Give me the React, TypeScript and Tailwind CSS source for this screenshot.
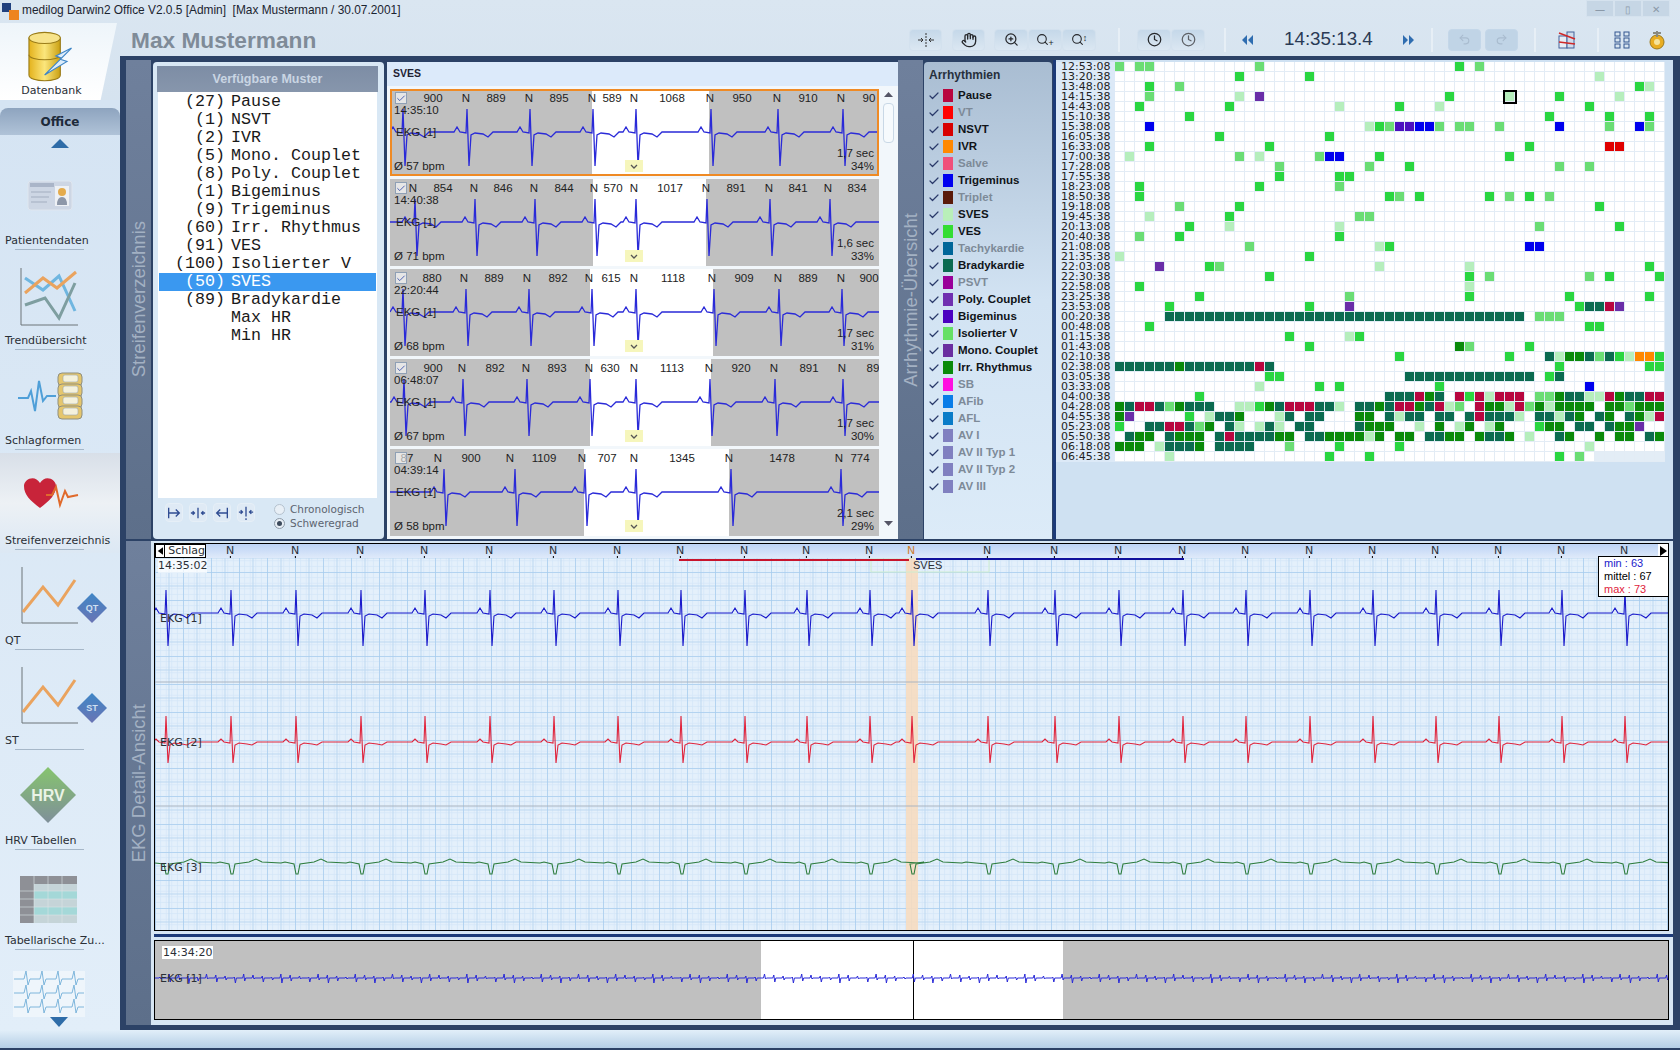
import { Check, Clock, Hand, Redo2, Search, Undo2, ZoomIn } from 'lucide-react';
import type { ReactNode } from 'react';

// ---- EKG helpers

function ekgPath(
  beats: number[],
  width: number,
  base: number,
  up: number,
  down: number,
  p: number,
  t: number
) {
  let d = `M0 ${base}`;
  for (const b of beats) {
    d += ` L${b - 13} ${base} L${b - 10} ${base - p} L${b - 7} ${base} L${b - 1} ${base + 1} L${b} ${base - up} L${b + 2} ${base + down} L${b + 4} ${base + 3} L${b + 8} ${base + 1} L${b + 16} ${base + 2} L${b + 21} ${base + t} L${b + 26} ${base}`;
  }
  return d + ` L${width} ${base}`;
}

function slowPath(beats: number[], base: number, width: number) {
  let d = `M0 ${base}`;
  for (const b of beats) {
    d += ` L${b - 2} ${base + 1} L${b} ${base + 11} L${b + 2} ${base + 11} L${b + 4} ${base + 1} L${b + 18} ${base - 1} L${b + 25} ${base - 4} L${b + 31} ${base - 1} L${b + 50} ${base} L${b + 54} ${base - 1}`;
  }
  return d + ` L${width} ${base}`;
}

function overviewPath(width: number) {
  let d = 'M0 37';
  for (let i = 0; i * 9.3 < width; i++) {
    const x = i * 9.3 + 4;
    d += ` L${x.toFixed(1)} 37 L${(x + 1).toFixed(1)} ${36 - (i * 7) % 4} L${(x + 2).toFixed(1)} ${38 + (i * 3) % 5} L${(x + 3).toFixed(1)} 37`;
  }
  return d;
}

// ---- Data

const patterns = [
  ['(27)', 'Pause'],
  ['(1)', 'NSVT'],
  ['(2)', 'IVR'],
  ['(5)', 'Mono. Couplet'],
  ['(8)', 'Poly. Couplet'],
  ['(1)', 'Bigeminus'],
  ['(9)', 'Trigeminus'],
  ['(60)', 'Irr. Rhythmus'],
  ['(91)', 'VES'],
  ['(100)', 'Isolierter V'],
  ['(50)', 'SVES'],
  ['(89)', 'Bradykardie'],
  ['', 'Max HR'],
  ['', 'Min HR'],
];

const strips = [
  {
    time: '14:35:10', bpm: '57', sec: '1,7 sec', pct: '34%', win: [202, 319], checked: true,
    spikes: [13, 77, 140, 203, 246, 321, 388, 453],
    labels: [[43, '900'], [76, 'N'], [106, '889'], [139, 'N'], [169, '895'], [202, 'N'], [222, '589'], [244, 'N'], [282, '1068'], [320, 'N'], [352, '950'], [387, 'N'], [418, '910'], [451, 'N'], [479, '90']],
  },
  {
    time: '14:40:38', bpm: '71', sec: '1,6 sec', pct: '33%', win: [203, 316], checked: true,
    spikes: [25, 85, 145, 205, 246, 317, 380, 440],
    labels: [[23, 'N'], [53, '854'], [84, 'N'], [113, '846'], [144, 'N'], [174, '844'], [204, 'N'], [223, '570'], [244, 'N'], [280, '1017'], [316, 'N'], [346, '891'], [379, 'N'], [408, '841'], [438, 'N'], [467, '834']],
  },
  {
    time: '22:20:44', bpm: '68', sec: '1,7 sec', pct: '31%', win: [200, 323], checked: true,
    spikes: [13, 76, 139, 202, 246, 324, 389, 452],
    labels: [[42, '880'], [74, 'N'], [104, '889'], [137, 'N'], [168, '892'], [199, 'N'], [221, '615'], [244, 'N'], [283, '1118'], [322, 'N'], [354, '909'], [388, 'N'], [418, '889'], [451, 'N'], [479, '900']],
  },
  {
    time: '06:48:07', bpm: '67', sec: '1,7 sec', pct: '30%', win: [200, 321], checked: true,
    spikes: [14, 73, 137, 200, 246, 320, 385, 453],
    labels: [[43, '900'], [72, 'N'], [105, '892'], [136, 'N'], [167, '893'], [199, 'N'], [220, '630'], [244, 'N'], [282, '1113'], [319, 'N'], [351, '920'], [384, 'N'], [419, '891'], [452, 'N'], [483, '89']],
  },
  {
    time: '04:39:14', bpm: '58', sec: '2,1 sec', pct: '29%', win: [194, 339], checked: false,
    spikes: [54, 125, 195, 246, 341, 451],
    labels: [[17, '87'], [48, 'N'], [81, '900'], [120, 'N'], [154, '1109'], [192, 'N'], [217, '707'], [244, 'N'], [292, '1345'], [339, 'N'], [392, '1478'], [449, 'N'], [470, '774']],
  },
];

const legend = [
  ['Pause', 'bg-[#b8063f]', true],
  ['VT', 'bg-[#ff0000]', false],
  ['NSVT', 'bg-[#d80000]', true],
  ['IVR', 'bg-[#ff8800]', true],
  ['Salve', 'bg-[#f0507a]', false],
  ['Trigeminus', 'bg-[#0000f0]', true],
  ['Triplet', 'bg-[#5a1a0a]', false],
  ['SVES', 'bg-[#b9efb9]', true],
  ['VES', 'bg-[#33dd33]', true],
  ['Tachykardie', 'bg-[#006699]', false],
  ['Bradykardie', 'bg-[#0b6b50]', true],
  ['PSVT', 'bg-[#990099]', false],
  ['Poly. Couplet', 'bg-[#7030b0]', true],
  ['Bigeminus', 'bg-[#4b00c0]', true],
  ['Isolierter V', 'bg-[#66e066]', true],
  ['Mono. Couplet', 'bg-[#6a2ea0]', true],
  ['Irr. Rhythmus', 'bg-[#0a8a0a]', true],
  ['SB', 'bg-[#ff10e0]', false],
  ['AFib', 'bg-[#0a7de8]', false],
  ['AFL', 'bg-[#0a7cc8]', false],
  ['AV I', 'bg-[#8080c0]', false],
  ['AV II Typ 1', 'bg-[#8080c0]', false],
  ['AV II Typ 2', 'bg-[#8080c0]', false],
  ['AV III', 'bg-[#8080c0]', false],
] as [string, string, boolean][];

const cellColors: Record<string, string> = {
  V: 'bg-[#2ad640]',
  I: 'bg-[#6bdd74]',
  S: 'bg-[#b6eebc]',
  B: 'bg-[#0b6b50]',
  G: 'bg-[#0a8a0a]',
  R: 'bg-[#b8063f]',
  N: 'bg-[#e00000]',
  T: 'bg-[#0000ee]',
  U: 'bg-[#4b10c0]',
  P: 'bg-[#6a2ea8]',
  O: 'bg-[#ff8800]',
};

const bradyRun = (from: number, to: number) => {
  let s = '';
  for (let i = from; i <= to; i++) s += ` ${i}B`;
  return s;
};

const gridRows: [string, string][] = [
  ['12:53:08', '0I 2I 3I 14I 34V 36I'],
  ['13:20:38', '12V 19V 48S'],
  ['13:48:08', '3V 6I 52V 53S'],
  ['14:15:38', '3I 12S 14P 33V 39S 44V 50S'],
  ['14:43:08', '2V 11V 22S 28V 32S 47V'],
  ['15:10:38', '7V 43V 49V 53V'],
  ['15:38:08', '3T 25S 26V 27I 28U 29U 30T 31T 32I 34I 35I 38I 44T 49I 52T 53I'],
  ['16:05:38', '10V 21V'],
  ['16:33:08', '3V 15V 41V 49N 50N'],
  ['17:00:38', '1S 12I 14S 20I 21T 22T 26V 39V'],
  ['17:28:08', '16I 25I 29V 44I 47I'],
  ['17:55:38', '16V 22V 23V'],
  ['18:23:08', '2V 14V 22I'],
  ['18:50:38', '2V 27V 28I 30V 37V 39I 41V 43I'],
  ['19:18:08', '6I 12V 48V'],
  ['19:45:38', '3S 11V 24I 25I'],
  ['20:13:08', '7V 11S 22S 42I 50V'],
  ['20:40:38', '2I 6V 22V'],
  ['21:08:08', '13I 26S 27V 41T 42T'],
  ['21:35:38', '0S 19V'],
  ['22:03:08', '4P 9V 10I 26S 35S 53V'],
  ['22:30:38', '15V 35V 37I 47I 49V 54V'],
  ['22:58:08', '2V 35S'],
  ['23:25:38', '8V 23I 35V 45V 53V'],
  ['23:53:08', '5V 19V 23P 46V 47B 48B 49R 50P'],
  ['00:20:38', bradyRun(5, 40) + ' 42I 43I 44I'],
  ['00:48:08', '3V 47V 48V'],
  ['01:15:38', '17V 23S 24V'],
  ['01:43:08', '19V 34G 35I 41V'],
  ['02:10:38', '28V 39V 43B 44S 45G 46G 47B 48I 49B 50V 51S 52O 53O 54V'],
  ['02:38:08', bradyRun(0, 13) + ' 6G 14R 15B 44V 53V 54V'],
  ['03:05:38', '15V 16V' + bradyRun(29, 41) + ' 43V 44B'],
  ['03:33:08', '14S 20V 22V 32V 47T'],
  ['04:00:38', '8V 27B 28B 29B 30R 31G 32B 34R 35V 36R 37S 38R 39R 40R 42I 43I 44G 45B 46B 47S 48S 49R 50G 51B 52B 53R 54R'],
  ['04:28:08', '0G 1B 2R 3R 4B 5I 6G 7B 8B 9B 12S 13S 14V 15G 16B 17R 18R 19R 20B 21B 22S 24B 25B 26G 27B 28R 29R 30G 31B 32R 33S 34I 36R 37G 38G 39S 40R 41I 42G 43S 44G 45G 46G 47G 49G 50G 51I 52G 53G 54G'],
  ['04:55:38', '0G 1P 7V 9S 10B 11B 12G 16S 17B 19B 20B 24G 25G 27B 28S 29B 30B 32B 33B 35B 36R 37B 38B 39B 40S 42B 43B 44S 45B 46G 48B 49G 51B 52G 53S 54R'],
  ['05:23:08', '0V 3B 4B 5R 6R 7B 8I 9G 11B 12S 14S 15B 16S 18B 19B 24B 25G 26G 27G 30S 32G 34S 35G 37S 38G 42V 43G 44G 46B 47B 49B 50G 51G 52P'],
  ['05:50:38', '1B 2G 3G 5B 6G 7G 8G 10B 11R 12B 13B 14B 15B 16G 17G 19B 20B 21G 22G 23G 24G 25S 26G 28G 29G 31B 32B 33G 34G 36G 37B 38B 39G 41S 44B 45G 48G 50G 51G 53B 54G'],
  ['06:18:08', '0G 1G 2G 4S 5B 6B 7B 8G 10B 11B 12B 13B 17I 22V 28V 47S'],
  ['06:45:38', '5S 21V 25V 44V 46I'],
];

const detailBeats = [165, 230, 295, 360, 424, 489, 553, 617, 680, 744, 806, 869, 911, 987, 1054, 1118, 1182, 1245, 1309, 1372, 1435, 1498, 1561, 1624];
const localBeats = detailBeats.map((b) => b - 154);

const minorLines = [0, 5.6, 11.2, 16.8, 22.4];

// ---- Small parts

function VerticalStrip({ label }: { label: string }) {
  return (
    <div className="flex w-[25px] shrink-0 items-center justify-center bg-gradient-to-b from-[#6f809c] to-[#5d6f8a]">
      <span className="rotate-180 text-[18.5px] text-[#a3b1c3] [writing-mode:vertical-rl] font-['Liberation_Sans',sans-serif]">
        {label}
      </span>
    </div>
  );
}

function ToolButton({
  children,
  className = '',
  dim = false,
}: {
  children: ReactNode;
  className?: string;
  dim?: boolean;
}) {
  return (
    <div
      className={`flex h-[22px] w-[33px] items-center justify-center rounded-sm border ${
        dim
          ? 'border-[#c4d7e9] bg-[#c0d4e6] text-[#a9bccf]'
          : 'border-[#d3e1ee] bg-gradient-to-b from-[#c5d8e9] to-[#dbe7f2] text-[#26282c]'
      } ${className}`}
    >
      {children}
    </div>
  );
}

function Divider({ className }: { className: string }) {
  return <div className={`h-[24px] w-[2px] shrink-0 bg-[#e7eff6] ${className}`} />;
}

function DoubleArrow({ dir }: { dir: 'left' | 'right' }) {
  return (
    <svg width="14" height="12" viewBox="0 0 14 12" className={dir === 'right' ? 'rotate-180' : ''}>
      <path d="M6 1v10L1 6zM12 1v10L7 6z" fill="#2f6db0" />
    </svg>
  );
}

function StripRow({ strip, active }: { strip: (typeof strips)[number]; active: boolean }) {
  return (
    <div className="relative h-[87px] w-[489px] shrink-0 overflow-hidden bg-[#c0c0c0] font-['Liberation_Sans',sans-serif] text-[11.5px] leading-[14px] text-[#222]">
      <div
        className="absolute bottom-0 top-0 bg-white"
        style={{ left: strip.win[0], width: strip.win[1] - strip.win[0] }}
      />
      <svg className="absolute left-0 top-0" width="489" height="87">
        <path
          d={ekgPath(strip.spikes, 489, 43, 23, 34, 5, 5)}
          fill="none"
          stroke="#2a2ad8"
          strokeWidth="1.3"
        />
      </svg>
      {strip.labels.map(([x, text], i) => (
        <span key={i} className="absolute top-[2px] -translate-x-1/2" style={{ left: x as number }}>
          {text}
        </span>
      ))}
      <div className="absolute left-[5px] top-[3px] flex h-[12px] w-[12px] items-center justify-center border border-[#8fa0b5] bg-white/60">
        {strip.checked && <Check size={11} strokeWidth={2} className="text-[#3048a8]" />}
      </div>
      <span className="absolute left-[4px] top-[14px]">{strip.time}</span>
      <span className="absolute left-[6px] top-[36px]">EKG [1]</span>
      <span className="absolute bottom-[3px] left-[4px]">Ø {strip.bpm} bpm</span>
      <span className="absolute bottom-[16px] right-[5px]">{strip.sec}</span>
      <span className="absolute bottom-[3px] right-[5px]">{strip.pct}</span>
      <div className="absolute left-[235px] top-[71px] flex h-[12px] w-[18px] items-center justify-center bg-[#f6f6bc]">
        <svg width="8" height="5" viewBox="0 0 8 5">
          <path d="M1 1l3 3 3-3" fill="none" stroke="#555" strokeWidth="1.3" />
        </svg>
      </div>
      {active && <div className="absolute inset-0 border-2 border-[#ef8a24]" />}
    </div>
  );
}

function GridRow({ row, time, cells }: { row: number; time: string; cells: string }) {
  const map = new Map<number, string>();
  for (const c of cells.trim().split(/\s+/)) {
    map.set(parseInt(c, 10), c.slice(-1));
  }
  return (
    <div className="flex h-[10px]">
      <div className="w-[59px] shrink-0 bg-[#dce9f7] pl-[5px] font-['DejaVu_Sans',sans-serif] text-[11px] leading-[10px] text-[#222]">
        {time}
      </div>
      {Array.from({ length: 55 }, (_, col) => {
        const kind = map.get(col);
        const boxed = row === 3 && col === 39;
        const fill = kind
          ? cellColors[kind]
          : row === 39 && col >= 48
            ? 'bg-[#e3edf6]'
            : 'bg-white';
        return (
          <div
            key={col}
            className={`h-[10px] w-[10px] border-b border-r border-[#e3ecf5] ${fill} ${
              boxed ? 'relative z-10 outline-2 outline-black' : ''
            }`}
          />
        );
      })}
    </div>
  );
}

// ---- Sidebar icons, 120 wide and drawn relative to their item

function ChartIcon({ badge }: { badge: string }) {
  return (
    <svg width="120" height="80" viewBox="0 0 120 80">
      <defs>
        <linearGradient id={`d${badge}`} x1="0" y1="0" x2="0" y2="1">
          <stop offset="0" stopColor="#3f86c6" />
          <stop offset="1" stopColor="#6a74b4" />
        </linearGradient>
      </defs>
      <path d="M22 14V70H78" fill="none" stroke="#6d7479" strokeWidth="1" />
      <path d="M23 59L43 34L58 52L75 27" fill="none" stroke="#eaa35e" strokeWidth="3" />
      <path d="M92 40L107 55L92 70L77 55Z" fill={`url(#d${badge})`} />
      <text x="92" y="58" textAnchor="middle" fontSize="9" fontWeight="700" fill="#cfe0f2" fontFamily="Liberation Sans">
        {badge}
      </text>
    </svg>
  );
}

const sideItems: { label: string; icon: ReactNode; active?: boolean }[] = [
  {
    label: 'Patientendaten',
    icon: (
      <svg width="120" height="80" viewBox="0 0 120 80">
        <rect x="28" y="28" width="44" height="29" rx="3" fill="#cdd6e4" stroke="#dfe6ef" />
        <rect x="30" y="30" width="24" height="4" fill="#aab5c8" />
        <path d="M31 39H51M31 44H49M31 49H47" stroke="#a3aec0" strokeWidth="1.2" />
        <rect x="55" y="33" width="14" height="20" fill="#eef1f5" />
        <circle cx="62" cy="39" r="4" fill="#e4ab4c" />
        <path d="M57 52q0-8 5-8t5 8z" fill="#8d97a8" />
      </svg>
    ),
  },
  {
    label: 'Trendübersicht',
    icon: (
      <svg width="120" height="80" viewBox="0 0 120 80">
        <path d="M21 15V72H78" fill="none" stroke="#6d7479" strokeWidth="1" />
        <path d="M25 25L43 37L59 23L75 58" fill="none" stroke="#6fb6e0" strokeWidth="3" />
        <path d="M25 52L45 45L59 65L75 30" fill="none" stroke="#7e9ea0" strokeWidth="3" />
        <path d="M25 40L43 25L57 35L76 19" fill="none" stroke="#eaa35e" strokeWidth="3" />
      </svg>
    ),
  },
  {
    label: 'Schlagformen',
    icon: (
      <svg width="120" height="80" viewBox="0 0 120 80">
        <path d="M18 45H28L31 38L35 58L39 28L43 48L47 43H56" fill="none" stroke="#4f9fd8" strokeWidth="2" />
        {[20, 31, 42, 53].map((y) => (
          <g key={y}>
            <rect x="58" y={y} width="24" height="13" rx="4" fill="#e5c66d" stroke="#8f8f80" />
            <rect x="63" y={y + 2} width="15" height="7" rx="2" fill="#f4f1dc" stroke="#9aa5ad" strokeWidth="0.6" />
          </g>
        ))}
      </svg>
    ),
  },
  {
    label: 'Streifenverzeichnis',
    active: true,
    icon: (
      <svg width="120" height="80" viewBox="0 0 120 80">
        <path d="M40 55C30 47 24 42 24 33C24 26 35 21 40 30C45 21 56 26 56 33C56 42 50 47 40 55Z" fill="#c8243a" />
        <path d="M46 42L52 42L56 34L60 52L65 38L68 44L78 42" fill="none" stroke="#e06a2c" strokeWidth="2" />
      </svg>
    ),
  },
  { label: 'QT', icon: <ChartIcon badge="QT" /> },
  { label: 'ST', icon: <ChartIcon badge="ST" /> },
  {
    label: 'HRV Tabellen',
    icon: (
      <svg width="120" height="80" viewBox="0 0 120 80">
        <defs>
          <linearGradient id="hrv" x1="0" y1="0" x2="0" y2="1">
            <stop offset="0" stopColor="#86c46e" />
            <stop offset="1" stopColor="#7f8f9a" />
          </linearGradient>
        </defs>
        <path d="M48 14L76 42L48 70L20 42Z" fill="url(#hrv)" />
        <text x="48" y="48" textAnchor="middle" fontSize="16" fontWeight="700" fill="#eaf3e6" fontFamily="Liberation Sans">
          HRV
        </text>
      </svg>
    ),
  },
  {
    label: 'Tabellarische Zu...',
    icon: (
      <svg width="120" height="80" viewBox="0 0 120 80">
        <rect x="20" y="23" width="57" height="47" fill="#c5d4d8" />
        <rect x="20" y="23" width="57" height="8" fill="#8e9096" />
        <rect x="20" y="23" width="14" height="47" fill="#8e9096" />
        <rect x="34" y="38" width="43" height="8" fill="#a4d8d8" />
        <rect x="34" y="54" width="43" height="8" fill="#a4d8d8" />
        <path d="M20 38H77M20 46H77M20 54H77M20 62H77M34 23V70M48 23V70M62 23V70" stroke="#dbe4e8" strokeWidth="0.6" />
      </svg>
    ),
  },
];

function Sidebar() {
  return (
    <div className="flex h-full w-[120px] shrink-0 flex-col font-['DejaVu_Sans',sans-serif] text-[11px] text-[#2a2f36]">
      <div className="flex h-[77px] w-[117px] flex-col items-center bg-gradient-to-b from-[#eef5fa] to-white pr-[14px] [clip-path:polygon(0_0,100%_0,86%_100%,0_100%)]">
        <svg width="56" height="54" viewBox="0 0 50 48" className="mr-[8px] mt-[7px]">
          <defs>
            <linearGradient id="db" x1="0" y1="0" x2="1" y2="0">
              <stop offset="0" stopColor="#e4b21c" />
              <stop offset="0.5" stopColor="#fbe67c" />
              <stop offset="1" stopColor="#caa012" />
            </linearGradient>
          </defs>
          <path d="M8 7V40C8 47 36 47 36 40V7Z" fill="url(#db)" stroke="#9a7c18" />
          <ellipse cx="22" cy="7" rx="14" ry="5" fill="#f7e38a" stroke="#9a7c18" />
          <path d="M8 22C8 28 36 28 36 22" fill="none" stroke="#9a7c18" />
          <path d="M46 16L32 23L37 25L22 40L42 28L36 26Z" fill="#dcecfa" stroke="#3f86c6" />
        </svg>
        <span className="-mt-[1px]">Datenbank</span>
      </div>

      <div className="flex min-h-0 flex-1 flex-col overflow-hidden bg-gradient-to-b from-[#d5e4f3] to-[#e2eef9] pt-[8px]">
        <div className="flex h-[27px] shrink-0 items-center justify-center rounded-t-lg bg-gradient-to-b from-[#8ea4bf] to-[#b0c3d8] text-[12px] font-bold text-[#1d2a3a]">
          Office
        </div>
        <div className="flex h-[18px] shrink-0 items-start justify-center pt-[4px]">
          <svg width="18" height="9" viewBox="0 0 18 9">
            <path d="M0 9L9 0L18 9Z" fill="#2e6ca8" />
          </svg>
        </div>

        {sideItems.map((item) => (
          <div
            key={item.label}
            className={`h-[100px] shrink-0 ${item.active ? 'bg-gradient-to-b from-[#d8dfe8] via-[#edf1f5] to-[#dce8f4]' : ''}`}
          >
            {item.icon}
            <div className="h-[16px] whitespace-nowrap pl-[5px] leading-[16px]">{item.label}</div>
            <div className="ml-[15px] h-px w-[69px] bg-[#a6b7c8]" />
          </div>
        ))}

        <div className="flex shrink-0 flex-col items-center">
          <svg width="120" height="64" viewBox="0 0 120 64">
            <rect x="13" y="18" width="72" height="46" fill="#eef5fb" />
            {[26, 40, 54].map((y) => (
              <path
                key={y}
                d={`M14 ${y}H24L26 ${y - 8}L28 ${y + 6}L30 ${y}H40L42 ${y - 8}L44 ${y + 6}L46 ${y}H56L58 ${y - 8}L60 ${y + 6}L62 ${y}H72L74 ${y - 8}L76 ${y + 6}L78 ${y}H84`}
                fill="none"
                stroke="#7eb6dc"
              />
            ))}
          </svg>
          <svg width="120" height="11" viewBox="0 0 120 11">
            <path d="M50 0H68L59 10Z" fill="#2e6ca8" />
          </svg>
        </div>
      </div>
    </div>
  );
}

function Toolbar() {
  return (
    <div className="flex h-[33px] items-center">
      <span className="ml-[11px] w-[186px] whitespace-nowrap pt-[1px] font-['Liberation_Sans',sans-serif] text-[22.7px] font-bold text-[#7f8b98]">
        Max Mustermann
      </span>
      <ToolButton className="ml-[592px]">
        <svg width="18" height="16" viewBox="0 0 18 16" stroke="#333" fill="none">
          <path d="M9 1V15" strokeDasharray="2 1" />
          <path d="M1 8H6M4 6L6 8L4 10M17 8H12M14 6L12 8L14 10" />
        </svg>
      </ToolButton>
      <ToolButton className="ml-[10px]">
        <Hand size={16} />
      </ToolButton>
      <div className="ml-[9px] flex">
        <ToolButton className="w-[34px]">
          <ZoomIn size={15} />
        </ToolButton>
        <ToolButton className="w-[34px]">
          <Search size={13} />
          <span className="-ml-[1px] mt-[6px] text-[9px] leading-none">+</span>
        </ToolButton>
        <ToolButton className="w-[34px]">
          <Search size={13} />
          <span className="-ml-[1px] mb-[4px] text-[9px] leading-none">↕</span>
        </ToolButton>
      </div>
      <Divider className="ml-[22px]" />
      <div className="ml-[17px] flex">
        <ToolButton className="w-[34px]">
          <Clock size={15} />
        </ToolButton>
        <ToolButton className="w-[34px]">
          <Clock size={15} className="text-[#5d6066]" />
        </ToolButton>
      </div>
      <Divider className="ml-[19px]" />
      <div className="ml-[15px]">
        <DoubleArrow dir="left" />
      </div>
      <span className="ml-[29px] w-[91px] whitespace-nowrap font-['Liberation_Sans',sans-serif] text-[18.8px] text-[#2a3a55]">
        14:35:13.4
      </span>
      <div className="ml-[26px]">
        <DoubleArrow dir="right" />
      </div>
      <Divider className="ml-[16px]" />
      <ToolButton className="ml-[15px]" dim>
        <Undo2 size={13} />
      </ToolButton>
      <ToolButton className="ml-[4px]" dim>
        <Redo2 size={13} />
      </ToolButton>
      <Divider className="ml-[16px]" />
      <svg width="18" height="20" viewBox="0 0 18 20" className="ml-[22px]">
        <rect x="1" y="6" width="8" height="12" fill="#e8edf5" stroke="#44629a" />
        <rect x="9" y="2" width="7" height="16" fill="#d0dcec" stroke="#44629a" />
        <path d="M1 3L17 9M1 12L17 14" stroke="#d02828" strokeWidth="1.5" />
      </svg>
      <Divider className="ml-[21px]" />
      <svg width="16" height="18" viewBox="0 0 16 18" className="ml-[15px]" fill="none" stroke="#33568f">
        <rect x="1" y="1" width="5" height="4" />
        <rect x="10" y="1" width="5" height="4" />
        <rect x="1" y="7" width="5" height="4" />
        <rect x="10" y="7" width="5" height="4" />
        <rect x="1" y="13" width="5" height="4" />
        <rect x="10" y="13" width="5" height="4" />
      </svg>
      <svg width="18" height="20" viewBox="0 0 18 20" className="ml-[18px]">
        <circle cx="9" cy="12" r="7" fill="#e9ad22" stroke="#9c7a1c" />
        <circle cx="9" cy="12" r="3" fill="#f6e39a" />
        <path d="M9 1V7M5 3H13" stroke="#8a8a80" strokeWidth="2" />
      </svg>
    </div>
  );
}

function ListPanel() {
  return (
    <div className="ml-[2px] mt-[2px] flex w-[231px] shrink-0 flex-col rounded-sm bg-[#d9e8f5] pb-[4px] pl-[4px] pr-[6px] pt-[4px]">
      <div className="flex h-[26px] shrink-0 items-center justify-center bg-gradient-to-b from-[#7d8da5] to-[#8796ac] font-['Liberation_Sans',sans-serif] text-[12.5px] font-bold text-[#c9d5e3]">
        Verfügbare Muster
      </div>
      <div className="mx-px flex h-[406px] flex-col bg-white pt-px font-['Liberation_Mono',monospace] text-[16.67px] leading-[18px] text-[#1a1a1a]">
        {patterns.map(([count, name]) => (
          <div
            key={name}
            className={`flex h-[18px] shrink-0 ${name === 'SVES' ? 'mx-px bg-[#3a98f0] text-white' : ''}`}
          >
            <span className={`text-right ${name === 'SVES' ? 'w-[66px]' : 'w-[67px]'}`}>{count}</span>
            <span className="ml-[6px] whitespace-pre">{name}</span>
          </div>
        ))}
      </div>
      <div className="flex flex-1 items-start pl-[8px] pt-[5px]">
        {['M3 3V15M3 9H15M11 5L15 9L11 13', 'M9 3V15M1 9H5M3 7L5 9L3 11M17 9H13M15 7L13 9L15 11', 'M15 3V15M3 9H15M7 5L3 9L7 13', 'M9 2V13M1 8H5M3 6L5 8L3 10M17 8H13M15 6L13 8L15 10M9 15V17'].map((d) => (
          <div key={d} className="mr-[6px] flex h-[19px] w-[18px] items-center justify-center rounded-sm border border-[#e6eff7] bg-[#dfeaf5]">
            <svg width="18" height="18" viewBox="0 0 18 18" fill="none" stroke="#2f4c92" strokeWidth="1.5">
              <path d={d} />
            </svg>
          </div>
        ))}
        <div className="ml-[13px] flex flex-col gap-[2px] font-['DejaVu_Sans',sans-serif] text-[10.5px] leading-[12px] text-[#5c6470]">
          <label className="flex items-center gap-[5px]">
            <span className="h-[11px] w-[11px] rounded-full border border-[#b5c2cf] bg-[#e8eff6]" />
            Chronologisch
          </label>
          <label className="flex items-center gap-[5px]">
            <span className="flex h-[11px] w-[11px] items-center justify-center rounded-full border border-[#8d9aa8] bg-[#e8eff6]">
              <span className="h-[5px] w-[5px] rounded-full bg-[#3c4a5c]" />
            </span>
            Schweregrad
          </label>
        </div>
      </div>
    </div>
  );
}

function StripPanel() {
  return (
    <div className="ml-[3px] mt-[2px] flex w-[511px] shrink-0 flex-col bg-[#f2f7fb]">
      <div className="flex h-[24px] shrink-0 items-center bg-[#dceafa] pl-[6px] font-['Liberation_Sans',sans-serif] text-[10.5px] font-bold text-[#223]">
        SVES
      </div>
      <div className="flex min-h-0 flex-1">
        <div className="flex flex-col gap-[3px] overflow-hidden pl-[3px] pt-[3px]">
          {strips.map((s, i) => (
            <StripRow key={s.time} strip={s} active={i === 0} />
          ))}
        </div>
        <div className="ml-[2px] flex w-[15px] flex-col items-center pt-[6px]">
          <svg width="9" height="5" viewBox="0 0 9 5">
            <path d="M0 5L4.5 0L9 5Z" fill="#556" />
          </svg>
          <div className="mt-[6px] h-[40px] w-[11px] rounded-sm border border-[#c9d8e6] bg-[#f6fafd]" />
          <svg width="9" height="5" viewBox="0 0 9 5" className="mt-[378px]">
            <path d="M0 0L4.5 5L9 0Z" fill="#556" />
          </svg>
        </div>
      </div>
    </div>
  );
}

function LegendPanel() {
  return (
    <div className="ml-px mt-[2px] flex w-[128px] shrink-0 flex-col rounded-t-sm bg-gradient-to-b from-[#a9bdd2] via-[#d2e3f3] to-[#dcebf8] pl-[4px] pt-[5px] font-['Liberation_Sans',sans-serif]">
      <div className="h-[20px] pl-px text-[12px] font-bold leading-[16px] text-[#27303c]">Arrhythmien</div>
      {legend.map(([name, swatch, on]) => (
        <div key={name} className="flex h-[17px] items-center">
          <Check size={12} strokeWidth={2.4} className="text-[#2a3a6a]" />
          <div className={`ml-[3px] h-[13px] w-[10px] ${swatch}`} />
          <span className={`ml-[5px] whitespace-nowrap text-[11.5px] font-bold ${on ? 'text-[#101418]' : 'text-[#7d8a98]'}`}>
            {name}
          </span>
        </div>
      ))}
    </div>
  );
}

function DetailChart() {
  return (
    <div className="relative h-[388px] w-[1515px] overflow-hidden border border-black bg-[#e4f0fb] font-['DejaVu_Sans',sans-serif] text-[11px] text-[#2a2f36]">
      <svg className="absolute left-0 top-0" width="1515" height="388">
        <defs>
          <pattern id="paper" width="28" height="28" patternUnits="userSpaceOnUse">
            {minorLines.map((v) => (
              <g key={v} stroke="#d3e5f6" strokeWidth="0.7">
                <path d={`M${v} 0V28`} />
                <path d={`M0 ${v}H28`} />
              </g>
            ))}
            <path d="M14 0V28M0 14H28" stroke="#bdd8f1" strokeWidth="1" />
            <path d="M0 0V28M0 0H28" stroke="#a5cbee" strokeWidth="1.5" />
          </pattern>
        </defs>
        <rect width="1515" height="388" fill="url(#paper)" />
        <rect x="751" width="12" height="388" fill="#f6dcc0" opacity="0.9" />
        <rect x="716" y="14" width="118" height="14" fill="none" stroke="#cfeecf" />
        <path d="M0 138H1515M0 262H1515" stroke="#aab4c0" />
        <path d={ekgPath(localBeats, 1515, 69, 23, 33, 5, 5)} fill="none" stroke="#1a1acb" strokeWidth="1.1" />
        <path d={ekgPath(localBeats, 1515, 198, 26, 21, 3, 3)} fill="none" stroke="#e0243c" strokeWidth="1.1" />
        <path d={slowPath(localBeats, 319, 1515)} fill="none" stroke="#2e7d3e" strokeWidth="1.1" />
      </svg>
      <div className="absolute left-0 right-0 top-0 h-[14px] bg-gradient-to-b from-[#bcd3f5] to-[#dfeafa]" />
      {localBeats.slice(1).map((b) => (
        <span
          key={b}
          className={`absolute top-0 -translate-x-1/2 leading-[13px] after:absolute after:left-1/2 after:top-[12px] after:h-[2px] after:w-px after:bg-black ${b === 757 ? 'text-[#d08030]' : ''}`}
          style={{ left: b - 1 }}
        >
          N
        </span>
      ))}
      <div className="absolute left-0 top-0 flex h-[14px] w-[51px] items-center border border-black bg-white pl-[1px]">
        <svg width="8" height="10" viewBox="0 0 8 10">
          <path d="M8 0V10L1 5Z" fill="#000" />
        </svg>
        <span className="ml-[1px] border-l border-black pl-[3px] text-[11px] leading-[12px]">Schlag</span>
      </div>
      <svg className="absolute right-0 top-0" width="10" height="14" viewBox="0 0 10 14">
        <path d="M0 0H10V14H0Z" fill="#fff" />
        <path d="M2 2V12L9 7Z" fill="#000" />
      </svg>
      <div className="absolute left-[524px] top-[15px] h-[2px] w-[230px] bg-[#c8142c]" />
      <div className="absolute left-[761px] top-[14px] h-[2px] w-[268px] bg-[#10109c]" />
      <span className="absolute left-[758px] top-[14px] font-['Liberation_Sans',sans-serif] leading-[14px]">SVES</span>
      <span className="absolute left-[3px] top-[15px] bg-white/70 leading-[14px]">14:35:02</span>
      <span className="absolute left-[5px] top-[68px] leading-[14px]">EKG [1]</span>
      <span className="absolute left-[5px] top-[192px] leading-[14px]">EKG [2]</span>
      <span className="absolute left-[5px] top-[317px] leading-[14px]">EKG [3]</span>
      <div className="absolute left-[1443px] top-[12px] flex h-[41px] w-[71px] flex-col justify-center border border-black bg-white pl-[5px] font-['Liberation_Sans',sans-serif] leading-[13px]">
        <span className="text-[#1a1acb]">min : 63</span>
        <span className="text-black">mittel : 67</span>
        <span className="text-[#e0243c]">max : 73</span>
      </div>
    </div>
  );
}

function OverviewChart() {
  return (
    <div className="relative h-[80px] w-[1515px] overflow-hidden border border-black bg-[#c0c0c0] font-['DejaVu_Sans',sans-serif] text-[11px] text-[#2a2f36]">
      <div className="absolute bottom-0 left-[606px] top-0 w-[302px] bg-white" />
      <div className="absolute bottom-0 left-[758px] top-0 w-px bg-black" />
      <svg className="absolute left-0 top-0" width="1515" height="80">
        <path d={overviewPath(1515)} fill="none" stroke="#2a2ad8" strokeWidth="1" />
      </svg>
      <span className="absolute left-[7px] top-[5px] bg-white px-px leading-[13px]">14:34:20</span>
      <span className="absolute left-[5px] top-[31px] leading-[14px]">EKG [1]</span>
    </div>
  );
}

export default function App() {
  return (
    <div className="flex h-[1050px] w-[1680px] flex-col overflow-hidden bg-gradient-to-b from-[#dae6f1] to-[#aec7de]">
      <div className="flex h-[23px] shrink-0 items-center">
        <svg width="18" height="18" viewBox="0 0 18 18" className="ml-[2px]">
          <rect x="0" y="0" width="9" height="9" fill="#20407e" />
          <rect x="7" y="7" width="10" height="10" fill="#ee8420" />
        </svg>
        <span className="mb-[2px] ml-[2px] whitespace-pre font-['Liberation_Sans',sans-serif] text-[11.9px] text-[#1b2430]">
          medilog Darwin2 Office V2.0.5 [Admin]  [Max Mustermann / 30.07.2001]
        </span>
        <div className="mb-[6px] ml-auto mr-[10px] flex">
          {['—', '▯', '✕'].map((g) => (
            <div
              key={g}
              className="flex h-[17px] w-[28px] items-center justify-center border border-[#d5e2ee] bg-[#c6d6e5] text-[10px] leading-none text-[#8b99a8]"
            >
              {g}
            </div>
          ))}
        </div>
      </div>

      <div className="flex min-h-0 flex-1">
        <Sidebar />
        <div className="flex min-w-0 flex-1 flex-col">
          <Toolbar />
          <div className="flex h-[974px] flex-col bg-[#2c4266] pb-[5px] pl-[6px] pr-[7px] pt-[4px]">
            <div className="flex h-[479px] shrink-0">
              <VerticalStrip label="Streifenverzeichnis" />
              <ListPanel />
              <StripPanel />
              <VerticalStrip label="Arrhythmie-Übersicht" />
              <LegendPanel />
              <div className="ml-px w-[3px] shrink-0 bg-[#1c3a78]" />
              <div className="flex w-[617px] shrink-0 flex-col bg-[#cfe1f2] pt-[2px]">
                {gridRows.map(([time, cells], i) => (
                  <GridRow key={time} row={i} time={time} cells={cells} />
                ))}
              </div>
            </div>
            <div className="mt-[2px] flex min-h-0 flex-1">
              <VerticalStrip label="EKG Detail-Ansicht" />
              <div className="flex flex-1 flex-col bg-[#d7e6f4] pl-[3px] pt-[2px]">
                <DetailChart />
                <div className="my-[3px] h-[3px] bg-[#1c3a78]" />
                <OverviewChart />
              </div>
            </div>
          </div>
        </div>
      </div>
      <div className="h-[20px] shrink-0 border-b-2 border-[#2c4266] bg-gradient-to-b from-[#e2eff9] to-[#b5cfe6]" />
    </div>
  );
}
